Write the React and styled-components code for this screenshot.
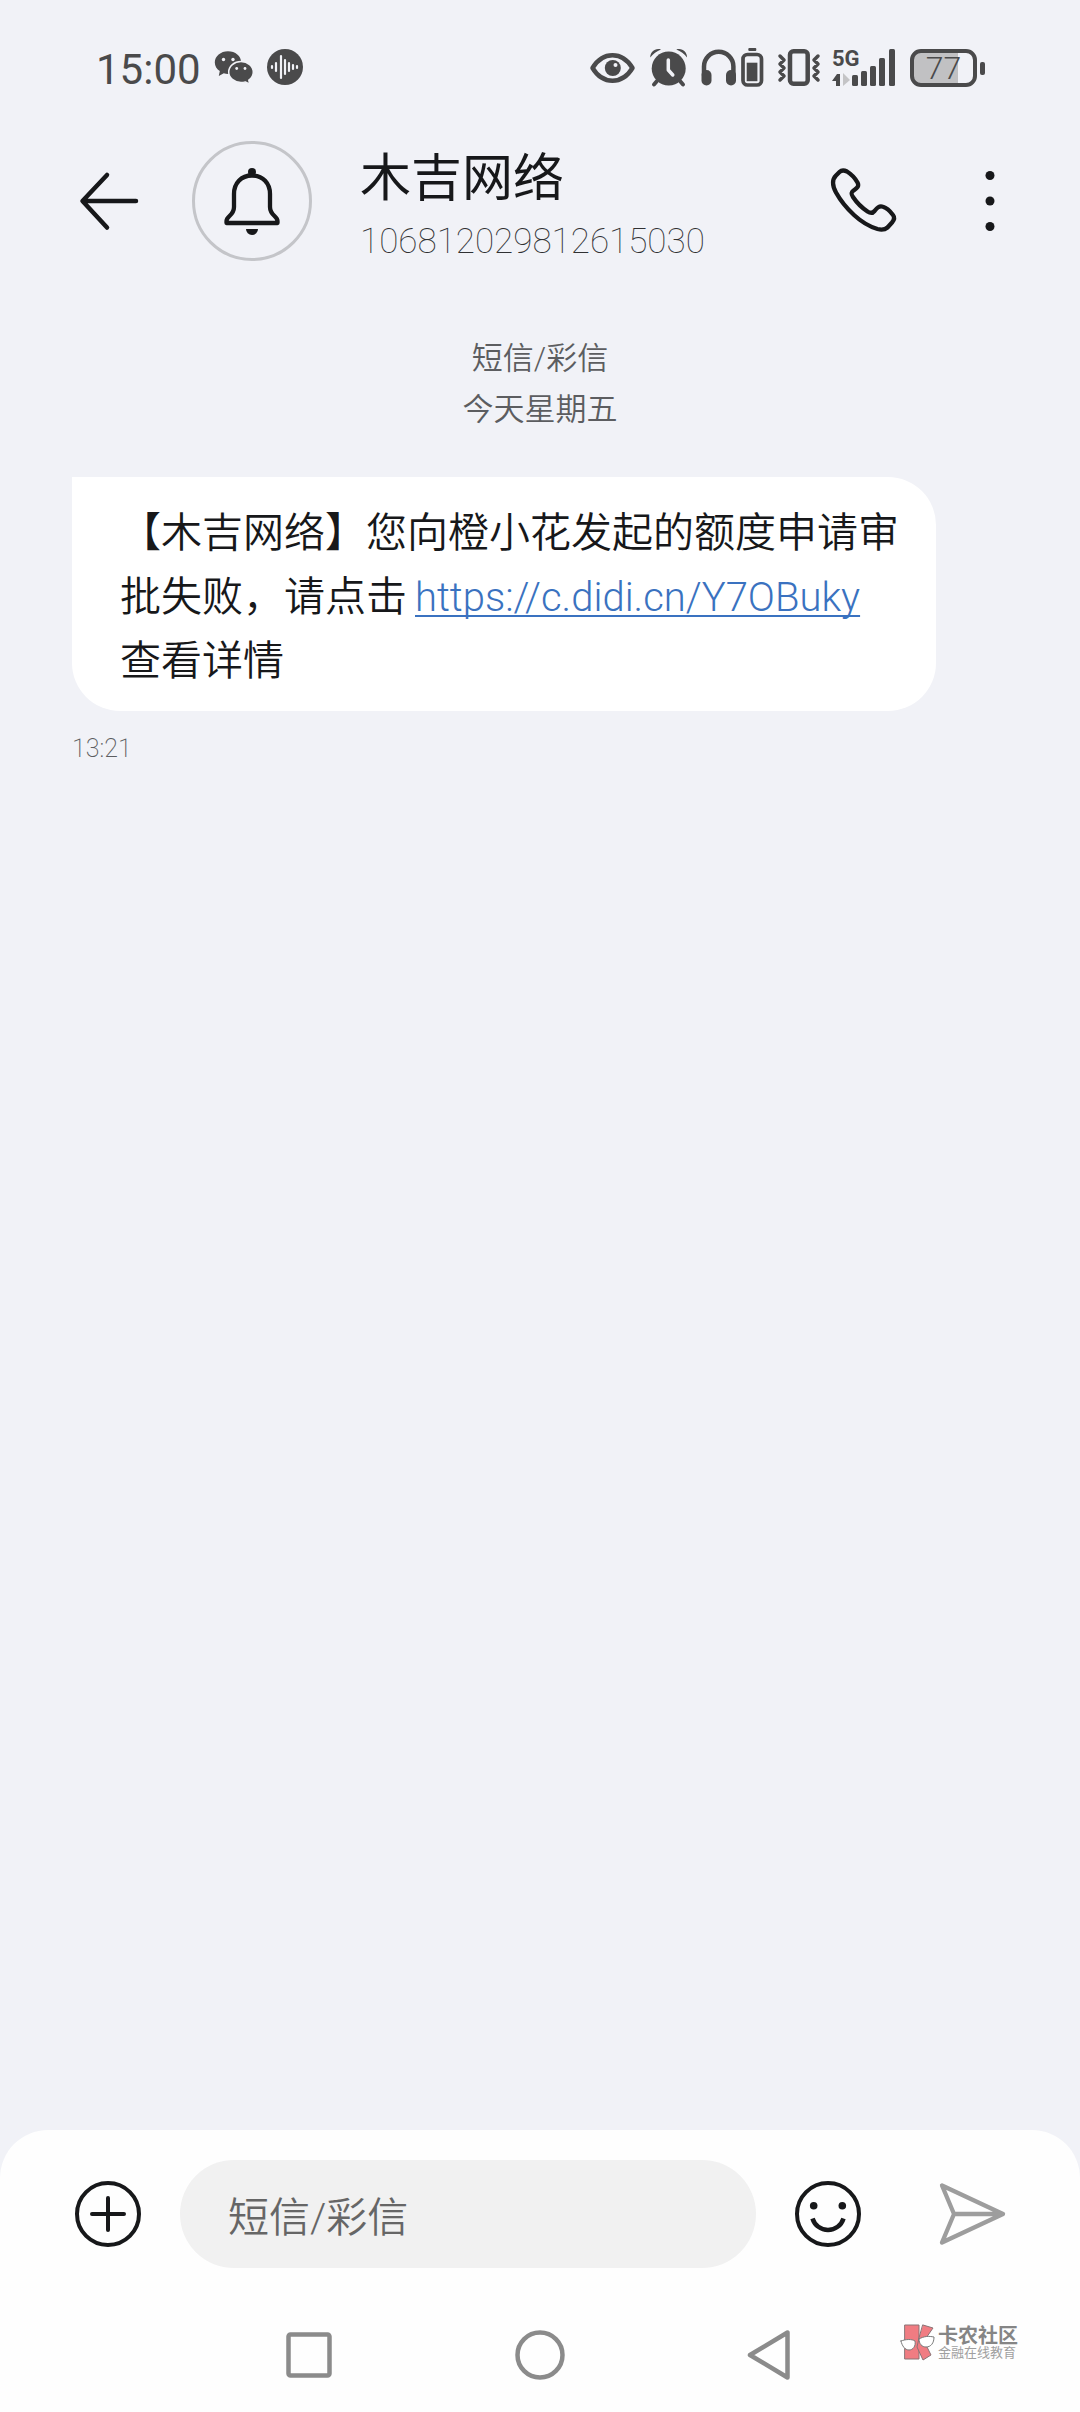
import styled, { createGlobalStyle } from "styled-components";

const ink = "#17181a";
const status = "#4a4a4b";
const muted = "#8b8b8b";

const GlobalStyle = createGlobalStyle`
  * {
    box-sizing: border-box;
  }
  body {
    margin: 0;
    background: #f1f2f7;
    color: ${ink};
    font-family: Roboto, "Noto Sans CJK SC", sans-serif;
    font-weight: 300;
  }
`;

const Screen = styled.div`
  display: flex;
  flex-direction: column;
  min-height: 100vh;
`;

const StatusBar = styled.div`
  display: flex;
  justify-content: space-between;
  padding: 48px 95px 0 96px;
  height: 88px;
  color: ${status};
`;

const StatusGroup = styled.div`
  display: flex;
  align-items: flex-start;
  gap: ${(p) => p.$gap};
`;

const Clock = styled.span`
  font-size: 42px;
  line-height: 44px;
  font-weight: 400;
`;

const Icon = styled.svg`
  display: block;
  flex: none;
  overflow: visible;
  fill: none;
  stroke: currentColor;
  stroke-linecap: round;
  stroke-linejoin: round;
`;

const Solid = styled(Icon)`
  fill: currentColor;
  stroke: none;
`;

const Battery = styled.div`
  display: flex;
  align-items: center;
  gap: 3px;
  height: 40px;
  width: 75px;

  &::after {
    content: "";
    width: 5px;
    height: 13px;
    border-radius: 2px;
    background: ${status};
  }
`;

const BatteryLevel = styled.div`
  flex: 1;
  height: 38px;
  border: 4px solid ${status};
  border-radius: 11px;
  background: linear-gradient(to right, #c1c1c3 75%, transparent 75%);
  font-size: 32px;
  line-height: 30px;
  text-align: center;
`;

const Header = styled.header`
  display: flex;
  align-items: center;
  padding: 50px 72px 0 78px;
`;

const IconButton = styled.button`
  display: flex;
  align-items: center;
  justify-content: center;
  flex: none;
  width: ${(p) => p.$width || "72px"};
  height: 72px;
  padding: 0;
  border: 0;
  background: none;
  color: ${(p) => p.$color || ink};
`;

const Avatar = styled.div`
  flex: none;
  width: 120px;
  height: 120px;
  margin: 0 48px 0 54px;
  border: 3px solid #c4c5c9;
  border-radius: 50%;
  display: flex;
  align-items: center;
  justify-content: center;
`;

const Contact = styled.div`
  flex: 1;
`;

const Name = styled.h1`
  margin: 0;
  font-size: 51px;
  line-height: 82px;
  font-weight: 400;
`;

const Number = styled.div`
  font-size: 35px;
  line-height: 44px;
  font-weight: 100;
  color: #303133;
`;

const HeaderActions = styled.div`
  display: flex;
  gap: 72px;
`;

const Thread = styled.main`
  flex: 1;
  padding: 69px 72px 0;
`;

const ThreadInfo = styled.div`
  margin-bottom: 42px;
  text-align: center;
  font-size: 31px;
  line-height: 51px;
  font-weight: 350;
  color: #5c5d60;
`;

const Bubble = styled.p`
  width: 864px;
  max-width: 100%;
  margin: 0;
  padding: 24px 36px 18px 48px;
  border-radius: 0 48px 48px 48px;
  background: #fff;
  font-size: 41px;
  line-height: 64px;
  font-weight: 350;
`;

const Link = styled.a`
  margin-left: 8px;
  color: #3a72c0;
  font-size: 40px;
  line-height: 1;
  font-weight: 300;
  text-decoration-thickness: 2px;
  text-underline-offset: 4px;
  text-decoration-skip-ink: none;
`;

const Time = styled.time`
  display: block;
  margin-top: 24px;
  font-size: 25px;
  line-height: 28px;
  font-weight: 200;
  color: #5c5d60;
`;

const Bottom = styled.footer`
  padding-top: 30px;
  border-radius: 48px 48px 0 0;
  background: #fefefe;
`;

const Composer = styled.form`
  display: flex;
  align-items: center;
  gap: 36px;
  padding: 0 72px;
`;

const MessageInput = styled.input`
  flex: 1;
  min-width: 0;
  height: 108px;
  padding: 8px 48px 0;
  border: 0;
  border-radius: 54px;
  background: #f1f1f1;
  font: inherit;
  font-size: 41px;
  font-weight: 350;
  color: ${ink};

  &::placeholder {
    color: #666;
    opacity: 1;
  }
`;

const ComposerActions = styled.div`
  display: flex;
  gap: 72px;
`;

const NavBar = styled.nav`
  position: relative;
  display: flex;
  align-items: center;
  justify-content: center;
  gap: 135px;
  height: 114px;
  margin-top: 30px;
`;

const Watermark = styled.div`
  position: absolute;
  top: 27px;
  right: 62px;
  display: flex;
  gap: 2px;
  color: #858585;
`;

const Brand = styled.div`
  font-size: 20px;
  line-height: 22px;
  font-weight: 700;
`;

const Slogan = styled.div`
  font-size: 13px;
  line-height: 12px;
  font-weight: 400;
  color: #a0a0a0;
`;

const AUDIO_BARS = [
  [5, 1],
  [9, 4],
  [14, 11],
  [18, 7],
  [22, 4],
  [26, 2],
  [30, 1],
];

const SIGNAL_BARS = [
  [20, 27],
  [29, 23],
  [38, 18],
  [47, 10],
  [57, 1],
];

function StatusIcons() {
  return (
    <StatusGroup $gap="14px">
      <Icon width="46" height="40" strokeWidth="4.5">
        <path d="M2.5 20C8 11 15 7.3 22.5 7.3S37 11 42.5 20C37 29 30 32.7 22.5 32.7S8 29 2.5 20Z" />
        <circle cx="22.8" cy="20" r="8" fill="currentColor" stroke="none" />
        <circle cx="25.5" cy="17" r="2" fill="#f1f2f7" stroke="none" />
      </Icon>
      <Icon width="37" height="40" strokeWidth="4">
        <circle cx="18.7" cy="20.5" r="17" fill="currentColor" stroke="none" />
        <path d="M7 33l-3 3.5M30 33l3 3.5" />
        <path
          d="M.3 9.5C0 4 5.5-.5 11 1.5Q4.5 4 .3 9.5ZM37 9.5C37.3 4 32-.5 26.3 1.5Q33 4 37 9.5Z"
          fill="currentColor"
          stroke="none"
        />
        <path d="M18.3 12v10l4.5 5" stroke="#f1f2f7" strokeWidth="3.5" />
      </Icon>
      <Icon width="63" height="40" strokeWidth="4.5">
        <path d="M3 27v-8.5a14.7 14.7 0 0 1 29.4 0V27" />
        <rect x=".5" y="22" width="10" height="15.5" rx="5" fill="currentColor" stroke="none" />
        <rect x="25" y="22" width="10" height="15.5" rx="5" fill="currentColor" stroke="none" />
        <rect x="42" y="6.5" width="18.5" height="30.5" rx="4.5" strokeWidth="3.7" />
        <rect x="45.7" y="14.7" width="10.7" height="18.5" fill="currentColor" stroke="none" />
        <rect x="47.3" y="0" width="8" height="3" rx="1" fill="currentColor" stroke="none" />
      </Icon>
      <Icon width="40" height="40" strokeWidth="4.5">
        <rect x="12" y="3.3" width="17.7" height="32.5" rx="3.5" />
        <path
          d="M2 8l4 4-4 4 4 4-4 4 4 4-4 4M40 8l-4 4 4 4-4 4 4 4-4 4 4 4"
          strokeWidth="3.5"
        />
      </Icon>
      <Solid width="64" height="40">
        <text x="0" y="18" fontSize="22" fontWeight="700">
          5G
        </text>
        <path d="M0 33L5 26h3v12H4v-5Z" />
        <path d="M11 25l7 7-7 6Z" fill="#c4c4c6" />
        {SIGNAL_BARS.map(([x, y]) => (
          <rect key={x} x={x} y={y} width="6" height={38 - y} rx="1.5" />
        ))}
      </Solid>
      <Battery>
        <BatteryLevel>77</BatteryLevel>
      </Battery>
    </StatusGroup>
  );
}

export default function App() {
  return (
    <Screen>
      <GlobalStyle />
      <StatusBar>
        <StatusGroup $gap="13px">
          <Clock>15:00</Clock>
          <Solid width="40" height="40">
            <path d="M14 3.3C6.7 3.3.8 8.2.8 14.5c0 3.7 2 6.6 5 8.6l-1 5 5-2.8c1.3.4 2.7.6 4.2.6 7.3 0 13.2-5 13.2-11.4S21.3 3.3 14 3.3Z" />
            <path
              d="M27 13.5c-6.8 0-12.3 4.7-12.3 10.5S20.2 34.5 27 34.5c1.5 0 3-.2 4.3-.6l4.5 2.3-1-4c2.7-1.9 4.5-4.9 4.5-8.2 0-5.8-5.500-10.500-12.300-10.500Z"
              stroke="#f1f2f7"
              strokeWidth="1.5"
            />
            <g fill="#f1f2f7">
              <circle cx="9.5" cy="11.5" r="1.7" />
              <circle cx="19" cy="11.5" r="1.7" />
              <circle cx="22.7" cy="20.5" r="1.4" />
              <circle cx="31" cy="20.5" r="1.4" />
            </g>
          </Solid>
          <Icon width="36" height="40" strokeWidth="2.2">
            <circle cx="18" cy="19" r="18" fill="currentColor" stroke="none" />
            {AUDIO_BARS.map(([x, h]) => (
              <path key={x} d={`M${x} ${19 - h}v${h * 2}`} stroke="#f1f2f7" />
            ))}
          </Icon>
        </StatusGroup>
        <StatusIcons />
      </StatusBar>

      <Header>
        <IconButton $width="60px" aria-label="返回">
          <Icon width="60" height="60" strokeWidth="4.5">
            <path d="M58 30H5M29 4L4.5 30 29 56.5" />
          </Icon>
        </IconButton>
        <Avatar>
          <Icon width="120" height="120" strokeWidth="4.3">
            <circle cx="60" cy="31" r="4" fill="currentColor" stroke="none" />
            <path d="M60 34.5C49 34.5 42 42.5 42 53v13c0 8.5-7.5 9-7.5 14v2h51v-2c0-5-7.5-5.5-7.5-14V53c0-10.5-7-18.5-18-18.5Z" />
            <path d="M54 88h12a6 6 0 0 1-12 0Z" fill="currentColor" stroke="none" />
          </Icon>
        </Avatar>
        <Contact>
          <Name>木吉网络</Name>
          <Number>106812029812615030</Number>
        </Contact>
        <HeaderActions>
          <IconButton aria-label="呼叫">
            <Icon width="72" height="72" strokeWidth="4.3">
              <path d="M11.5 7L8 10.5C3.5 15 4.5 21 8 27.5 13 36.5 19 43.5 26 50c7 6.5 15 11.5 23.5 14 4 1 7 1 10-1.5l4.5-5c2.5-3 3-5 1-7.5C62 46 59 43 55 41.8c-4-1.3-6 1.2-8.5 4.2-2 2.5-4 2.5-7 .5C33.5 42.5 29 38 25 32c-2-3-2.2-4.5.5-6.5 3.5-2.5 6-4 4-8C27 13 23 9 19 6.5 16 5 13.5 5 11.5 7Z" />
            </Icon>
          </IconButton>
          <IconButton $width="36px" aria-label="更多">
            <Solid width="36" height="72">
              <circle cx="18" cy="10.5" r="4.5" />
              <circle cx="18" cy="36" r="4.5" />
              <circle cx="18" cy="61.5" r="4.5" />
            </Solid>
          </IconButton>
        </HeaderActions>
      </Header>

      <Thread>
        <ThreadInfo>
          <div>短信/彩信</div>
          <div>今天星期五</div>
        </ThreadInfo>
        <Bubble>
          【木吉网络】您向橙小花发起的额度申请审批失败，请点击
          <Link href="https://c.didi.cn/Y7OBuky">https://c.didi.cn/Y7OBuky</Link>
          <br />
          查看详情
        </Bubble>
        <Time>13:21</Time>
      </Thread>

      <Bottom>
        <Composer onSubmit={(e) => e.preventDefault()}>
          <IconButton type="button" aria-label="添加">
            <Icon width="72" height="72" strokeWidth="4">
              <circle cx="36" cy="36" r="31" />
              <path d="M20 36h32M36 20v32" />
            </Icon>
          </IconButton>
          <MessageInput type="text" aria-label="短信/彩信" placeholder="短信/彩信" />
          <ComposerActions>
            <IconButton type="button" aria-label="表情">
              <Icon width="72" height="72" strokeWidth="4">
                <circle cx="36" cy="36" r="31" />
                <circle cx="21.7" cy="27.7" r="3.8" fill="currentColor" stroke="none" />
                <circle cx="50.3" cy="27.7" r="3.8" fill="currentColor" stroke="none" />
                <path
                  d="M20.5 40.5a16.2 16.2 0 0 0 31 0"
                  strokeWidth="4.5"
                  strokeLinecap="butt"
                />
              </Icon>
            </IconButton>
            <IconButton $color="#9d9d9d" aria-label="发送">
              <Icon width="72" height="72" strokeWidth="4.3">
                <path d="M6 7.5L67 36 6 64.5 18 36ZM18 36h49" />
              </Icon>
            </IconButton>
          </ComposerActions>
        </Composer>
        <NavBar>
          <IconButton $width="96px" $color={muted} aria-label="最近任务">
            <Icon width="54" height="54" strokeWidth="4.5">
              <rect x="6.5" y="6.5" width="41" height="41" rx="2" />
            </Icon>
          </IconButton>
          <IconButton $width="96px" $color={muted} aria-label="主屏幕">
            <Icon width="54" height="54" strokeWidth="4.5">
              <circle cx="27" cy="27" r="22.5" />
            </Icon>
          </IconButton>
          <IconButton $width="96px" $color={muted} aria-label="后退">
            <Icon width="54" height="54" strokeWidth="4.5">
              <path d="M6 27L43.5 4.5v45Z" />
            </Icon>
          </IconButton>
          <Watermark>
            <Icon width="36" height="36" viewBox="0 3 36 36" strokeWidth="1">
              <g fill="#f07c82" stroke="#8a7375">
                <path d="M5 3h14v34H5Z" />
                <path d="M23 3l10 3-9 13 7 14-8 5-6-13 2-9Z" />
              </g>
              <g fill="#fff" stroke="#7a7a7a">
                <path d="M1 19c5-2 11-2 14 0 1 5-2 9-6 9s-7-4-8-9Z" />
                <path d="M19 17c5-3 10-3 15-2 0 6-3 10-8 10-4 0-7-3-7-8Z" />
              </g>
            </Icon>
            <div>
              <Brand>卡农社区</Brand>
              <Slogan>金融在线教育</Slogan>
            </div>
          </Watermark>
        </NavBar>
      </Bottom>
    </Screen>
  );
}
